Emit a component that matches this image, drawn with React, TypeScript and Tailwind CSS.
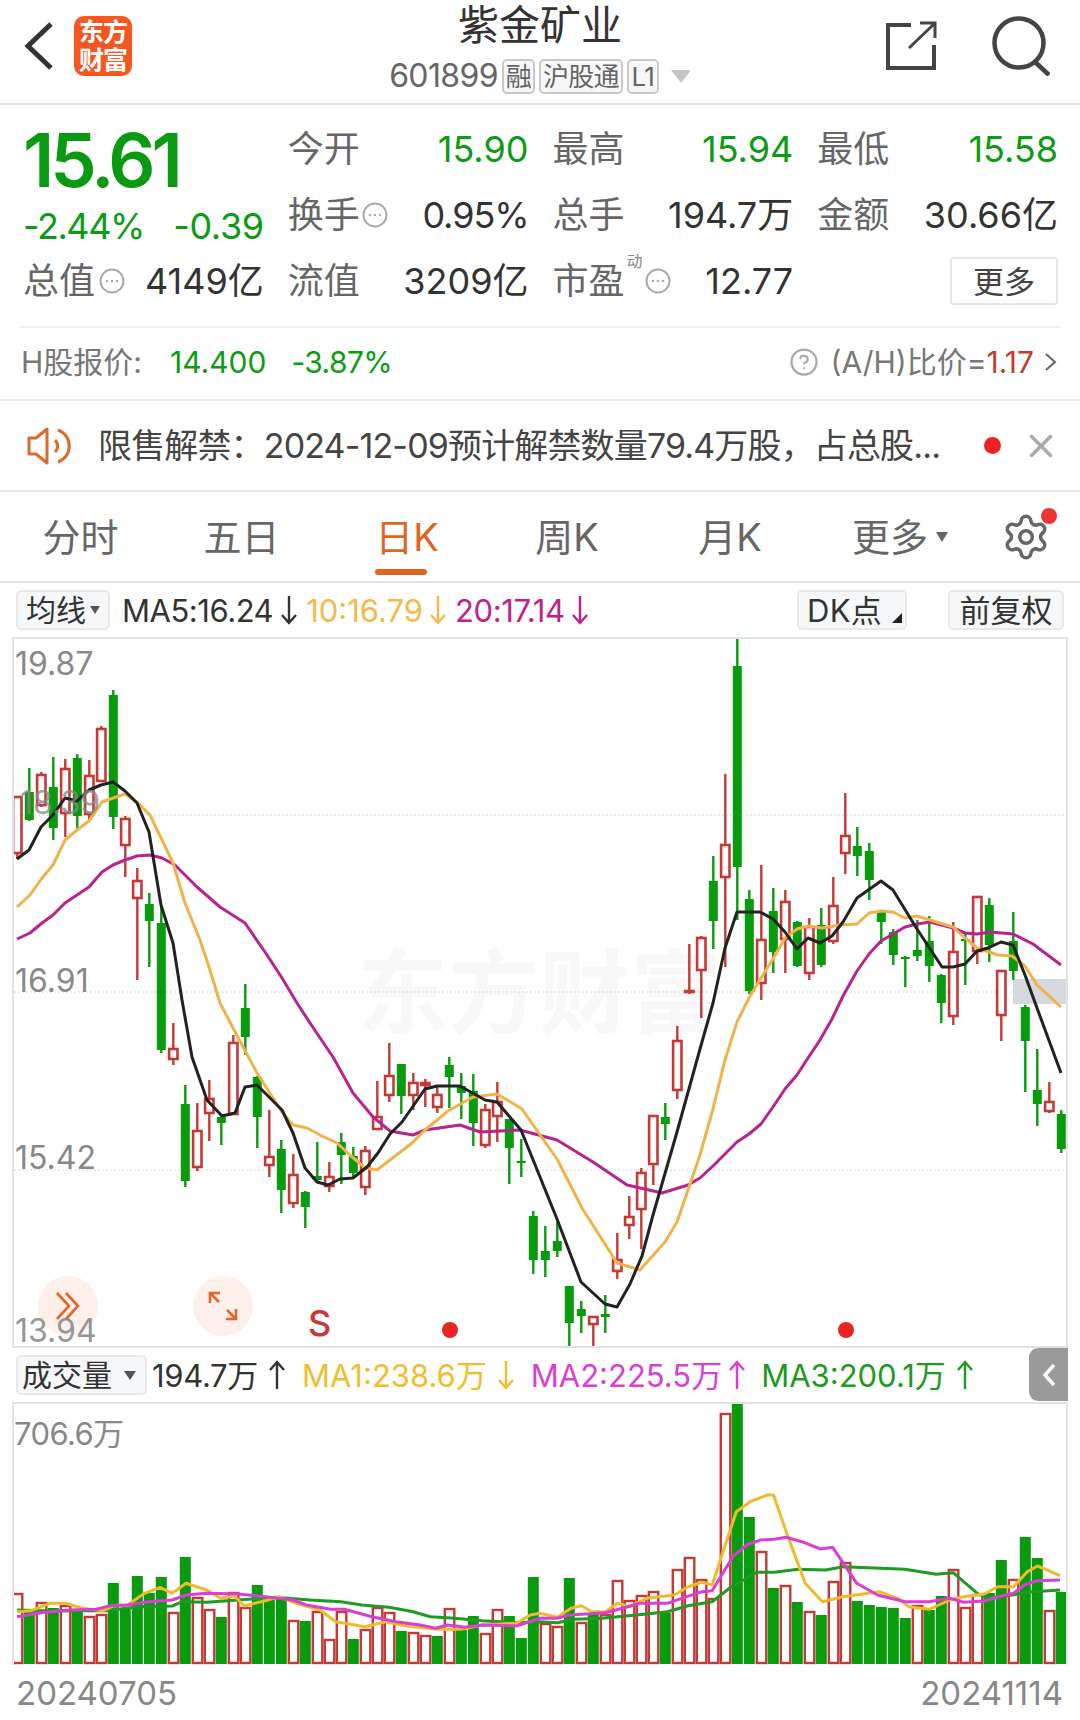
import { CircleHelp, Settings, X } from 'lucide-react';

const GREEN = '#079b0d';
const RED = '#c43a36';

// wick top, body top, body bottom, wick bottom, up (1 = red hollow)
const CANDLES: [number, number, number, number, number][] = [
  [797, 797, 853, 859, 1], [768, 792, 820, 821, 0], [772, 775, 805, 807, 1], [757, 787, 828, 840, 0],
  [759, 769, 813, 837, 1], [754, 758, 816, 830, 0], [760, 776, 814, 820, 1], [726, 729, 781, 782, 1],
  [690, 695, 817, 829, 0], [816, 819, 845, 877, 1], [868, 881, 898, 980, 1], [893, 904, 921, 967, 0],
  [907, 923, 1050, 1053, 0], [1023, 1049, 1059, 1065, 1], [1085, 1104, 1181, 1187, 0], [1103, 1131, 1167, 1171, 1],
  [1080, 1099, 1113, 1141, 1], [1115, 1117, 1123, 1145, 0], [1035, 1043, 1114, 1115, 1], [984, 1008, 1037, 1055, 0],
  [1076, 1077, 1117, 1148, 0], [1110, 1157, 1165, 1177, 1], [1140, 1149, 1190, 1213, 0], [1154, 1175, 1203, 1208, 1],
  [1191, 1192, 1207, 1228, 0], [1142, 1176, 1180, 1182, 0], [1162, 1177, 1186, 1192, 1], [1133, 1142, 1155, 1184, 0],
  [1147, 1156, 1173, 1177, 0], [1146, 1151, 1187, 1195, 1], [1081, 1117, 1129, 1129, 1], [1043, 1076, 1095, 1102, 1],
  [1064, 1064, 1096, 1114, 0], [1073, 1083, 1095, 1110, 1], [1079, 1083, 1085, 1107, 1], [1086, 1095, 1107, 1113, 1],
  [1057, 1065, 1077, 1108, 0], [1073, 1086, 1093, 1119, 0], [1074, 1091, 1123, 1146, 0], [1104, 1110, 1145, 1148, 1],
  [1082, 1102, 1116, 1142, 1], [1119, 1119, 1148, 1184, 0], [1139, 1161, 1162, 1177, 0], [1211, 1216, 1260, 1274, 0],
  [1226, 1251, 1260, 1277, 0], [1222, 1241, 1251, 1257, 0], [1286, 1286, 1323, 1347, 0], [1301, 1309, 1316, 1333, 0],
  [1316, 1317, 1324, 1347, 1], [1295, 1314, 1317, 1333, 0], [1233, 1260, 1271, 1279, 1], [1196, 1217, 1225, 1239, 1],
  [1168, 1173, 1209, 1249, 1], [1115, 1116, 1164, 1185, 1], [1103, 1117, 1124, 1140, 0], [1026, 1041, 1090, 1099, 1],
  [944, 991, 992, 994, 1], [936, 938, 970, 1018, 1], [856, 881, 921, 949, 0], [774, 845, 877, 967, 1],
  [638, 666, 867, 920, 0], [890, 899, 991, 994, 0], [865, 940, 983, 1000, 1], [888, 911, 952, 973, 0],
  [890, 902, 939, 973, 1], [921, 922, 966, 967, 0], [918, 927, 973, 980, 1], [908, 925, 965, 967, 0],
  [877, 906, 941, 944, 1], [793, 836, 853, 874, 1], [827, 846, 856, 876, 0], [843, 851, 880, 900, 0],
  [910, 911, 922, 944, 0], [929, 932, 955, 965, 0], [956, 957, 958, 987, 0], [920, 950, 956, 961, 0],
  [916, 941, 966, 982, 0], [974, 975, 1003, 1023, 0], [922, 952, 1016, 1025, 1], [934, 939, 940, 985, 0],
  [896, 897, 951, 964, 1], [898, 905, 945, 962, 0], [971, 971, 1015, 1041, 1], [912, 941, 971, 980, 0],
  [1005, 1007, 1041, 1092, 0], [1049, 1090, 1104, 1126, 0], [1082, 1102, 1111, 1113, 1], [1110, 1114, 1149, 1153, 0],
];

const MA5 = '17,859 29,850 41,827 53,815 65,798 77,801 89,790 101,785 113,782 125,791 137,803 149,832 161,905 173,943 182,1000 192,1057 207,1100 222,1116 235,1113 245,1087 257,1085 282,1110 293,1133 305,1168 317,1182 328,1185 340,1179 353,1178 367,1167 378,1153 390,1134 402,1122 425,1089 437,1086 460,1086 485,1100 497,1102 521,1130 557,1219 581,1282 605,1304 617,1307 630,1284 642,1256 653,1215 677,1132 700,1049 713,1003 725,948 737,912 760,912 773,919 785,932 797,949 808,938 820,943 832,936 843,922 857,898 881,881 893,890 917,929 942,967 953,967 965,964 977,951 988,948 1001,942 1013,945 1025,975 1037,1008 1061,1073';
const MA10 = '17,907 30,895 42,878 53,865 65,840 77,830 89,821 102,802 125,794 137,802 150,815 162,840 173,863 185,903 200,940 210,970 220,1003 233,1028 257,1073 282,1112 293,1125 307,1128 320,1135 337,1143 350,1155 365,1168 377,1170 412,1143 425,1130 448,1111 473,1097 497,1094 522,1109 557,1159 582,1208 617,1263 640,1270 665,1242 677,1222 700,1155 713,1109 725,1060 737,1022 749,998 761,978 773,959 785,938 797,929 808,926 822,928 840,925 857,924 869,913 881,911 893,912 905,918 917,916 930,920 953,927 965,938 977,948 998,955 1012,956 1025,966 1037,985 1061,1007';
const MA20 = '17,939 30,933 42,923 53,915 65,903 77,895 89,887 102,872 113,865 125,860 137,856 150,855 162,858 175,865 197,887 220,907 245,923 267,955 282,978 297,1003 310,1023 333,1057 353,1093 373,1117 390,1131 413,1135 425,1130 460,1125 480,1132 520,1130 557,1140 593,1162 627,1185 662,1193 688,1185 700,1178 713,1166 737,1142 749,1134 761,1124 773,1107 785,1089 797,1075 808,1058 820,1040 832,1019 843,996 857,971 869,954 881,941 893,934 905,927 917,924 930,922 953,928 965,933 977,934 990,932 1013,934 1033,944 1061,965';

// volume bar tops, same x spacing as the candles
const VOL_TOPS = [
  1594, 1612, 1603, 1608, 1606, 1610, 1617, 1615, 1583, 1609, 1576, 1593, 1577, 1613, 1557, 1598, 1610, 1617, 1593, 1608, 1585, 1598,
  1597, 1621, 1621, 1612, 1640, 1612, 1639, 1630, 1608, 1613, 1631, 1633, 1636, 1636, 1609, 1630, 1616, 1634, 1610, 1616, 1638, 1577,
  1624, 1627, 1578, 1623, 1614, 1615, 1581, 1601, 1596, 1592, 1613, 1570, 1558, 1580, 1599, 1414, 1402, 1517, 1552, 1588, 1586, 1602,
  1612, 1615, 1582, 1563, 1601, 1605, 1607, 1608, 1618, 1606, 1610, 1596, 1570, 1608, 1595, 1593, 1560, 1580, 1537, 1558, 1611, 1592,
];
const VOL_UP = new Set([
  0, 2, 4, 6, 7, 13, 15, 16, 18, 19, 23, 25, 26, 27, 29, 30, 31, 33, 34, 36, 39, 40, 44, 45, 47, 49, 50, 51, 52, 53, 55, 56, 57, 58, 59,
  62, 64, 66, 68, 69, 75, 78, 79, 80, 83, 86,
]);

const toPoints = (left: number[][], right: number[][]) =>
  [
    ...left.map(([x, y]) => [x / 2.904, 1340 + y / 3]),
    ...right.map(([x, y]) => [540 + x / 2.904, 1340 + y / 3]),
  ]
    .map(([x, y]) => `${x.toFixed(1)},${y.toFixed(1)}`)
    .join(' ');

const VOL_MA1 = toPoints(
  [[50, 815], [90, 812], [145, 790], [190, 790], [240, 805], [300, 812], [330, 798], [370, 795], [420, 760], [465, 742], [500, 760], [540, 730], [600, 750], [640, 775], [680, 768], [710, 798], [770, 782], [810, 770], [860, 790], [930, 810], [975, 845], [1060, 860], [1120, 845], [1165, 855], [1200, 860], [1270, 868], [1340, 868], [1400, 855], [1500, 850], [1540, 825]],
  [[0, 820], [50, 832], [90, 805], [120, 797], [150, 815], [190, 815], [225, 790], [260, 800], [310, 775], [390, 765], [430, 740], [470, 727], [500, 735], [530, 640], [570, 515], [610, 485], [660, 465], [678, 465], [715, 575], [770, 730], [820, 785], [880, 770], [985, 755], [1040, 775], [1070, 800], [1130, 808], [1190, 780], [1230, 770], [1290, 762], [1330, 740], [1375, 740], [1415, 695], [1445, 678], [1510, 707]],
);
const VOL_MA2 = toPoints(
  [[50, 830], [120, 818], [200, 810], [280, 808], [320, 797], [370, 795], [430, 785], [500, 780], [540, 765], [600, 760], [690, 762], [770, 770], [850, 780], [890, 795], [960, 808], [1000, 808], [1080, 830], [1150, 845], [1220, 855], [1265, 865], [1300, 855], [1350, 862], [1400, 855], [1500, 858]],
  [[0, 835], [50, 835], [85, 825], [190, 818], [240, 805], [290, 790], [370, 790], [420, 772], [470, 755], [500, 752], [560, 650], [600, 615], [640, 600], [680, 598], [715, 592], [760, 605], [815, 627], [850, 622], [920, 730], [980, 765], [1060, 785], [1130, 785], [1190, 775], [1230, 787], [1290, 783], [1340, 768], [1375, 760], [1410, 733], [1445, 722], [1510, 720]],
);
const VOL_MA3 = toPoints(
  [[50, 810], [150, 813], [250, 812], [310, 812], [400, 800], [500, 798], [530, 785], [600, 787], [690, 780], [800, 772], [900, 780], [990, 785], [1050, 795], [1130, 802], [1200, 815], [1250, 830], [1320, 835], [1400, 842], [1500, 848]],
  [[0, 845], [50, 848], [100, 838], [180, 835], [280, 825], [370, 815], [430, 797], [500, 785], [550, 745], [630, 697], [680, 697], [750, 688], [830, 690], [880, 680], [1060, 688], [1150, 703], [1200, 698], [1270, 760], [1300, 775], [1370, 765], [1430, 755], [1510, 750]],
);

function MoreDot({ className = '' }: { className?: string }) {
  return (
    <svg viewBox="0 0 26 26" className={`h-[26px] w-[26px] shrink-0 ${className}`} fill="none">
      <circle cx="13" cy="13" r="11.5" stroke="#a9a9a9" strokeWidth="2" />
      <circle cx="8" cy="13" r="1.2" fill="#a9a9a9" />
      <circle cx="13" cy="13" r="1.2" fill="#a9a9a9" />
      <circle cx="18" cy="13" r="1.2" fill="#a9a9a9" />
    </svg>
  );
}

function Arrow({ up = false, color }: { up?: boolean; color: string }) {
  return (
    <svg viewBox="0 0 18 30" className="h-[30px] w-[18px] shrink-0" fill="none" stroke={color} strokeWidth="2.4">
      {up ? <path d="M9 29V2M2 10L9 2L16 10" /> : <path d="M9 1V28M2 20L9 28L16 20" />}
    </svg>
  );
}

function Tag({ children, w }: { children: React.ReactNode; w: string }) {
  return (
    <span className={`flex h-[35px] items-center justify-center rounded-[5px] border-2 border-[#c9c9c9] bg-[#f7f7f7] text-[26px] tracking-[-0.03em] text-[#666] ${w}`}>
      {children}
    </span>
  );
}

function Cell({ label, value, green, icon, tight }: { label: React.ReactNode; value: string; green?: boolean; icon?: React.ReactNode; tight?: boolean }) {
  return (
    <div className="flex h-[66px] items-center justify-between">
      <span className="flex items-center text-[#666]">
        {label}
        {icon}
      </span>
      <span className={`${tight ? 'tracking-[-0.03em]' : ''} ${green ? 'text-[#0c9b14]' : 'text-[#333]'}`}>{value}</span>
    </div>
  );
}

function Candle({ c, i }: { c: [number, number, number, number, number]; i: number }) {
  const [wt, bt, bb, wb, up] = c;
  const x = 17.3 + i * 12;
  const color = up ? RED : GREEN;
  return (
    <g>
      <line x1={x} x2={x} y1={wt} y2={wb} stroke={color} strokeWidth="2.4" />
      {up ? (
        <rect x={x - 4.2} y={bt} width={8.4} height={Math.max(bb - bt, 1)} fill="#fff" stroke={color} strokeWidth="2.6" />
      ) : (
        <rect x={x - 4.5} y={bt} width={9} height={Math.max(bb - bt, 2)} fill={color} />
      )}
    </g>
  );
}

export default function App() {
  return (
    <div className="h-[1720px] w-[1080px] overflow-hidden bg-white text-[#333] [font-family:Inter,'Noto_Sans_CJK_SC',sans-serif]">
      {/* title bar */}
      <header className="grid h-[105px] grid-cols-[1fr_auto_1fr] border-b-2 border-[#e4e4e4]">
        <div className="flex items-center gap-[21px] pb-[11px] pl-[24px]">
          <svg viewBox="0 0 29 48" className="h-[48px] w-[29px]" fill="none" stroke="#333" strokeWidth="5">
            <path d="M27 2L4 24L27 46" />
          </svg>
          <div className="flex h-[60px] w-[58px] flex-col items-center justify-center rounded-[10px] bg-[#f4571f] text-[25px] font-bold leading-[28px] tracking-[-0.04em] text-white">
            <span>东方</span>
            <span>财富</span>
          </div>
        </div>
        <div className="flex flex-col items-center">
          <div className="flex h-[50px] items-center text-[41px] leading-none text-[#333]">紫金矿业</div>
          <div className="flex h-[52px] items-center gap-[4px]">
            <span className="text-[32px] tracking-[-0.02em] text-[#666]">601899</span>
            <Tag w="w-[33px]">融</Tag>
            <Tag w="w-[84px]">沪股通</Tag>
            <Tag w="w-[32px]">L1</Tag>
            <span className="ml-[8px] h-0 w-0 border-x-[10px] border-t-[13px] border-x-transparent border-t-[#c4c4c4]" />
          </div>
        </div>
        <div className="flex items-center justify-end gap-[55px] pb-[11px] pr-[30px]">
          <svg viewBox="0 0 52 50" className="h-[50px] w-[52px]" fill="none" stroke="#444" strokeWidth="4">
            <path d="M26 4H3V47H49V24" />
            <path d="M24 27L49 3M35 2H50V17" strokeWidth="3" />
          </svg>
          <svg viewBox="0 0 58 60" className="h-[60px] w-[58px]" fill="none" stroke="#444" strokeWidth="4.5">
            <circle cx="27" cy="27" r="24.5" />
            <path d="M43 46L57 59" />
          </svg>
        </div>
      </header>

      {/* quote grid */}
      <section className="grid grid-cols-4 gap-x-[24px] pl-[23px] pr-[22px] pt-[11px] text-[36px] leading-none">
        <div className="row-span-2 flex flex-col">
          <div className="flex h-[88px] items-center text-[74px] font-semibold tracking-[-0.055em] text-[#0a9a12]">15.61</div>
          <div className="flex h-[44px] items-center justify-between text-[#0c9b14]">
            <span className="tracking-[-0.04em]">-2.44%</span>
            <span className="tracking-[-0.01em]">-0.39</span>
          </div>
        </div>
        <Cell label="今开" value="15.90" green />
        <Cell label="最高" value="15.94" green />
        <Cell label="最低" value="15.58" green />
        <Cell label="换手" value="0.95%" tight icon={<MoreDot className="ml-[2px]" />} />
        <Cell label="总手" value="194.7万" />
        <Cell label="金额" value="30.66亿" />
        <Cell label="总值" value="4149亿" icon={<MoreDot className="ml-[4px]" />} />
        <Cell label="流值" value="3209亿" />
        <Cell
          label={
            <span className="relative">
              市盈
              <span className="absolute -right-[18px] -top-[10px] text-[16px] text-[#888]">动</span>
            </span>
          }
          value="12.77"
          icon={<MoreDot className="ml-[20px]" />}
        />
        <div className="flex h-[66px] items-center justify-end">
          <span className="flex h-[48px] w-[108px] items-center justify-center rounded-[4px] border-2 border-[#e6e6e6] text-[31px] text-[#444]">更多</span>
        </div>
      </section>

      {/* H share row */}
      <section className="mx-[20px] mt-[12px] flex h-[73px] items-center border-t-2 border-[#efefef] pb-[4px] text-[30px] leading-none">
        <span className="ml-[1px] w-[149px] text-[#777]">H股报价:</span>
        <span className="text-[#0c9b14]">14.400</span>
        <span className="ml-[25px] tracking-[-0.02em] text-[#0c9b14]">-3.87%</span>
        <CircleHelp className="ml-auto h-[30px] w-[30px] text-[#aaa]" strokeWidth={1.8} />
        <span className="ml-[11px] text-[#777]">(A/H)比价=</span>
        <span className="text-[#c43a36]">1.17</span>
        <svg viewBox="0 0 12 18" className="ml-[11px] mr-[3px] h-[18px] w-[12px]" fill="none" stroke="#666" strokeWidth="2">
          <path d="M1 1L10 9L1 17" />
        </svg>
      </section>

      {/* notice */}
      <section className="flex h-[93px] items-center border-y-2 border-[#e8e8e8] pl-[27px] text-[#444]">
        <svg viewBox="0 0 44 38" className="h-[38px] w-[44px] shrink-0" fill="none" stroke="#dd6a2a" strokeWidth="3">
          <path d="M2 11H9L20 2V36L9 27H2Z" strokeLinejoin="round" />
          <path d="M28 13A8 8 0 0 1 28 25" />
          <path d="M31 3A17 17 0 0 1 31 35" />
        </svg>
        <span className="ml-[27px] w-[846px] whitespace-nowrap text-[34px] leading-none tracking-[-0.025em]">
          限售解禁：2024-12-09预计解禁数量79.4万股，占总股...
        </span>
        <span className="ml-[40px] h-[17px] w-[17px] rounded-full bg-[#ee2222]" />
        <X className="ml-[21px] h-[38px] w-[38px] text-[#aaa]" strokeWidth={2.2} />
      </section>

      {/* period tabs */}
      <nav className="flex h-[91px] items-center border-b-2 border-[#e4e4e4] text-[38px] leading-[50px] text-[#666]">
        <span className="w-[161px] text-center">分时</span>
        <span className="w-[161px] text-center">五日</span>
        <span className="flex w-[170px] justify-center text-[#e0651f]">
          <span className="relative">
            日K
            <span className="absolute -bottom-[13px] left-0 h-[6px] w-[52px] rounded-full bg-[#e0651f]" />
          </span>
        </span>
        <span className="w-[150px] text-center">周K</span>
        <span className="w-[176px] text-center">月K</span>
        <span className="flex w-[164px] items-center justify-center gap-[8px]">
          更多
          <span className="h-0 w-0 border-x-[6px] border-t-[10px] border-x-transparent border-t-[#666]" />
        </span>
        <span className="relative ml-[19px]">
          <Settings className="h-[50px] w-[50px] text-[#666]" strokeWidth={1.7} />
          <span className="absolute -right-[6px] -top-[4px] h-[16px] w-[16px] rounded-full bg-[#ee3333]" />
        </span>
      </nav>

      {/* MA legend */}
      <section className="flex h-[54px] items-center pl-[16px] pr-[16px] text-[31px] leading-none">
        <span className="flex h-[40px] w-[94px] items-center justify-center gap-[4px] rounded-[5px] border-2 border-[#e8e8e8] bg-[#f6f7f9] text-[30px]">
          均线
          <span className="h-0 w-0 border-x-[5px] border-t-[8px] border-x-transparent border-t-[#555]" />
        </span>
        <span className="ml-[12px] tracking-[-0.015em] text-[#333]">MA5:16.24</span>
        <span className="ml-[7px]"><Arrow color="#333" /></span>
        <span className="ml-[8px] text-[#f3b94c]">10:16.79</span>
        <span className="ml-[6px]"><Arrow color="#f3b94c" /></span>
        <span className="ml-[8px] tracking-[-0.012em] text-[#c0208c]">20:17.14</span>
        <span className="ml-[6px]"><Arrow color="#c0208c" /></span>
        <span className="relative ml-auto flex h-[40px] w-[110px] items-center justify-start rounded-[5px] border-2 border-[#e8e8e8] bg-[#f6f7f9] pl-[8px] tracking-[0.01em]">
          DK点
          <span className="absolute bottom-[5px] right-[3px] h-0 w-0 border-b-[10px] border-l-[10px] border-b-[#222] border-l-transparent" />
        </span>
        <span className="ml-[41px] flex h-[40px] w-[116px] items-center justify-center rounded-[5px] border-2 border-[#e8e8e8] bg-[#f6f7f9]">前复权</span>
      </section>

      {/* k-line chart */}
      <section className="relative mx-[12px] h-[711px] border-2 border-[#e3e3e3]">
        <div className="absolute left-[343px] top-[304px] whitespace-nowrap text-[91px] font-bold leading-[100px] text-[#f8f8f8]">东方财富</div>
        <svg viewBox="14 639 1052 707" className="relative block h-[707px] w-[1052px]" fill="none">
          <rect x="1013" y="979" width="53" height="25" fill="#d5d8dc" />
          {[815, 992, 1170].map((y) => (
            <line key={y} x1="14" x2="1066" y1={y} y2={y} stroke="#d6d6d6" strokeWidth="1" strokeDasharray="2 2" />
          ))}
          {CANDLES.map((c, i) => (
            <Candle key={i} c={c} i={i} />
          ))}
          <polyline points={MA20} stroke="#b8248f" strokeWidth="3" strokeLinejoin="round" />
          <polyline points={MA10} stroke="#f0b34a" strokeWidth="3" strokeLinejoin="round" />
          <polyline points={MA5} stroke="#222" strokeWidth="3" strokeLinejoin="round" />
          <circle cx="450" cy="1330" r="8" fill="#ee2222" />
          <circle cx="846" cy="1330" r="8" fill="#ee2222" />
        </svg>
        <span className="absolute left-[1px] top-[7px] text-[32px] leading-[36px] text-[#888]">19.87</span>
        <span className="absolute left-[6px] top-[146px] text-[32px] leading-[36px] text-[#888]/80">18.39</span>
        <span className="absolute left-[1px] top-[324px] text-[32px] leading-[36px] text-[#888]">16.91</span>
        <span className="absolute left-[1px] top-[501px] text-[32px] leading-[36px] text-[#888]">15.42</span>
        <span className="absolute left-[24px] top-[637px] flex h-[60px] w-[60px] items-center justify-center rounded-full bg-[#fdefe9]">
          <svg viewBox="0 0 26 28" className="h-[28px] w-[26px]" fill="none" stroke="#e8622a" strokeWidth="2.6">
            <path d="M2 1L14 14L2 27M11 1L23 14L11 27" />
          </svg>
        </span>
        <span className="absolute left-[179px] top-[637px] flex h-[60px] w-[60px] items-center justify-center rounded-full bg-[#fdefe9]">
          <svg viewBox="0 0 30 30" className="h-[30px] w-[30px]" fill="none" stroke="#e8622a" strokeWidth="2.6">
            <path d="M2 12V2H12M2 2L11 11M28 18V28H18M28 28L19 19" />
          </svg>
        </span>
        <span className="absolute left-[1px] top-[674px] text-[32px] leading-[36px] text-[#888]/90">13.94</span>
        <span className="absolute left-[294px] top-[662px] text-[36px] font-medium leading-[44px] text-[#c43a36]">S</span>
      </section>

      {/* volume legend */}
      <section className="relative flex h-[54px] items-center pl-[16px] text-[31px] leading-none">
        <span className="flex h-[40px] w-[131px] items-center gap-[12px] rounded-[5px] border-2 border-[#e8e8e8] bg-[#f6f7f9] pl-[4px] text-[30px] text-[#333]">
          成交量
          <span className="h-0 w-0 border-x-[6px] border-t-[9px] border-x-transparent border-t-[#555]" />
        </span>
        <span className="ml-[5px] tracking-[-0.01em]">194.7万</span>
        <span className="ml-[10px]"><Arrow up color="#333" /></span>
        <span className="ml-[16px] text-[#efbe2f]">MA1:238.6万</span>
        <span className="ml-[10px]"><Arrow color="#efbe2f" /></span>
        <span className="ml-[16px] text-[#d93fd3]">MA2:225.5万</span>
        <span className="ml-[6px]"><Arrow up color="#d93fd3" /></span>
        <span className="ml-[15px] text-[#1c9a22]">MA3:200.1万</span>
        <span className="ml-[10px]"><Arrow up color="#1c9a22" /></span>
        <span className="absolute right-[12px] top-0 flex h-[53px] w-[39px] items-center justify-center rounded-l-[9px] bg-[#9a9a9a]">
          <svg viewBox="0 0 14 24" className="h-[24px] w-[14px]" fill="none" stroke="#fff" strokeWidth="3.5">
            <path d="M12 2L3 12L12 22" />
          </svg>
        </span>
      </section>

      {/* volume chart */}
      <section className="relative mx-[12px] h-[263px] border-x-2 border-t-2 border-[#e3e3e3]">
        <svg viewBox="14 1404 1052 261" className="block h-[261px] w-[1052px]" fill="none">
          {VOL_TOPS.map((top, i) => {
            const x = 17.3 + i * 12;
            return VOL_UP.has(i) ? (
              <rect key={i} x={x - 4.5} y={top} width={9.5} height={1663 - top} fill="#fff" stroke={RED} strokeWidth="2.4" />
            ) : (
              <rect key={i} x={x - 5.5} y={top} width={11} height={1664 - top} fill={GREEN} />
            );
          })}
          <polyline points={VOL_MA3} stroke="#1f9a24" strokeWidth="3" strokeLinejoin="round" />
          <polyline points={VOL_MA1} stroke="#eebc2b" strokeWidth="3" strokeLinejoin="round" />
          <polyline points={VOL_MA2} stroke="#d93fd3" strokeWidth="3" strokeLinejoin="round" />
        </svg>
        <span className="absolute left-0 top-[12px] text-[31px] leading-[36px] tracking-[-0.02em] text-[#888]">706.6万</span>
      </section>

      {/* dates */}
      <footer className="flex h-[56px] items-center justify-between pl-[16px] pr-[17px] text-[33px] leading-none text-[#888]">
        <span>20240705</span>
        <span>20241114</span>
      </footer>
    </div>
  );
}
